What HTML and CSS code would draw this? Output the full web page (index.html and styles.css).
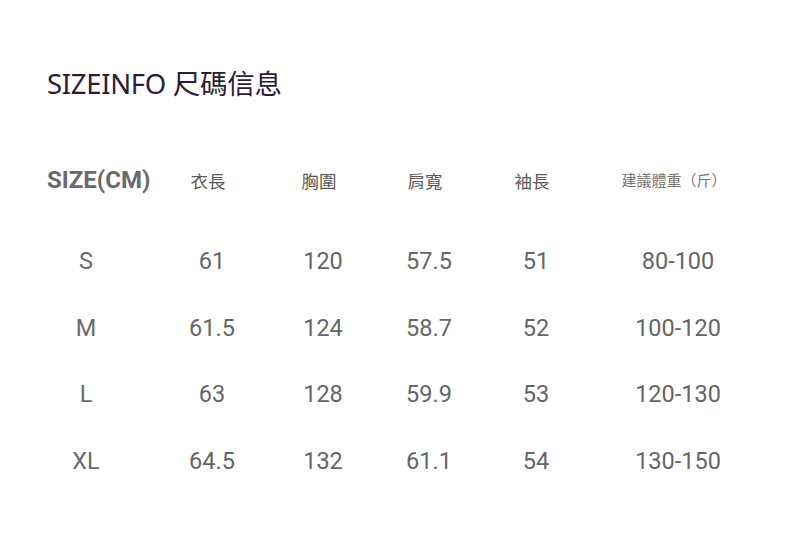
FILE: index.html
```html
<!DOCTYPE html>
<html lang="zh-Hant">
<head>
<meta charset="utf-8">
<title>SIZEINFO 尺碼信息</title>
<link rel="stylesheet" href="styles.css">
</head>
<body>
<div class="page">
  <h1 class="title">SIZEINFO 尺碼信息</h1>
  <div class="table">
    <div class="row head">
      <div class="cell first">SIZE(CM)</div>
      <div class="cell"><span class="hd">衣長</span></div>
      <div class="cell"><span class="hd">胸圍</span></div>
      <div class="cell"><span class="hd">肩寬</span></div>
      <div class="cell"><span class="hd">袖長</span></div>
      <div class="cell"><span class="hd small">建議體重（斤）</span></div>
    </div>
    <div class="row data">
      <div class="cell size">S</div>
      <div class="cell">61</div>
      <div class="cell">120</div>
      <div class="cell">57.5</div>
      <div class="cell">51</div>
      <div class="cell">80-100</div>
    </div>
    <div class="row data">
      <div class="cell size">M</div>
      <div class="cell">61.5</div>
      <div class="cell">124</div>
      <div class="cell">58.7</div>
      <div class="cell">52</div>
      <div class="cell">100-120</div>
    </div>
    <div class="row data">
      <div class="cell size">L</div>
      <div class="cell">63</div>
      <div class="cell">128</div>
      <div class="cell">59.9</div>
      <div class="cell">53</div>
      <div class="cell">120-130</div>
    </div>
    <div class="row data">
      <div class="cell size">XL</div>
      <div class="cell">64.5</div>
      <div class="cell">132</div>
      <div class="cell">61.1</div>
      <div class="cell">54</div>
      <div class="cell">130-150</div>
    </div>
  </div>
</div>
</body>
</html>
```
FILE: styles.css
```css
html, body {
  margin: 0;
  padding: 0;
  background: #ffffff;
}
.page {
  width: 790px;
  height: 549px;
  box-sizing: border-box;
  padding: 66px 0 0 23px;
  font-family: "Noto Sans", "Noto Sans CJK TC", sans-serif;
}
.title {
  margin: 0 0 0 24px;
  font-size: 27.5px;
  line-height: 36px;
  font-weight: 400;
  color: #2c1d36;
  letter-spacing: -0.3px;
}
.table {
  margin-top: 61px;
}
.row {
  display: grid;
  grid-template-columns: 126px 126px 96px 116px 98px 186px;
  align-items: center;
}
.head {
  height: 34px;
}
.data {
  height: 66.5px;
  font-family: Roboto, "Noto Sans", sans-serif;
  font-size: 23.5px;
  color: #666666;
}
.head + .data {
  margin-top: 31px;
}
.cell {
  text-align: center;
}
.first {
  text-align: left;
  padding-left: 24px;
  font-family: Roboto, "Noto Sans", sans-serif;
  font-weight: 700;
  font-size: 24px;
  color: #6a6a6a;
}
.hd {
  font-family: "Noto Sans CJK TC", sans-serif;
  font-size: 17.5px;
  color: #5a5a5a;
  position: relative;
  left: -4px;
}
.hd.small {
  font-size: 15px;
  color: #777777;
}
.size {
  font-family: Roboto, "Noto Sans", sans-serif;
  color: #6a6a6a;
}
```
